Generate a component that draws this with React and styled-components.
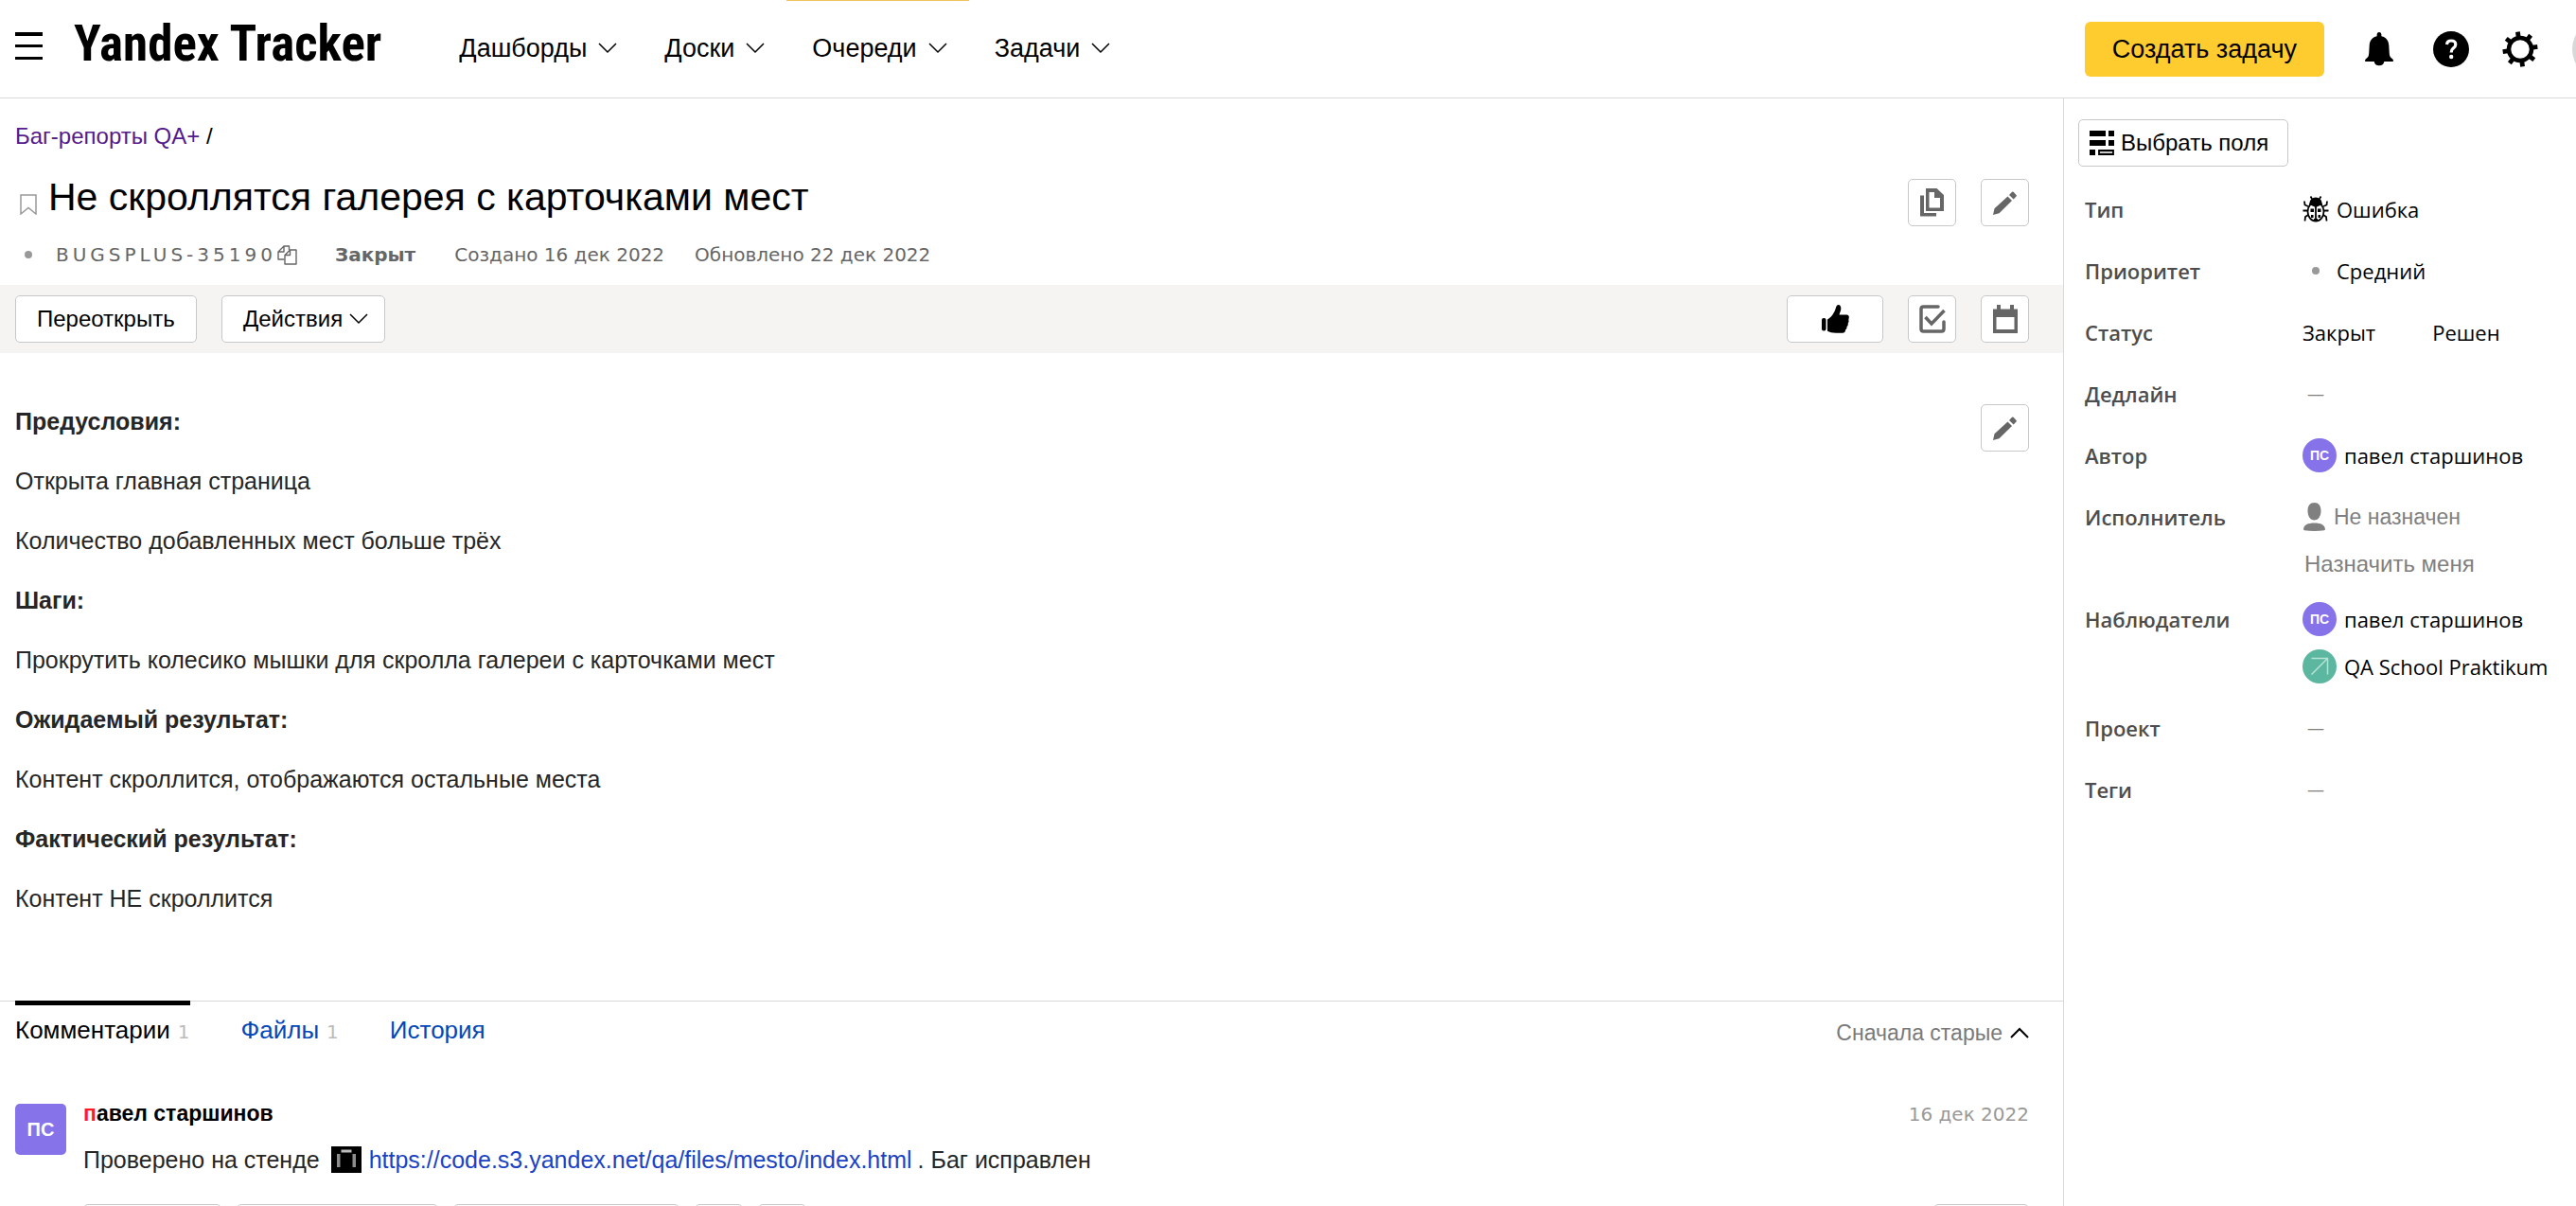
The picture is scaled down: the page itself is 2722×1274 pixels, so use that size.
import React from "react";
import styled, { createGlobalStyle } from "styled-components";

const SANS = '"Liberation Sans", Arial, sans-serif';
const HUMANIST = '"Open Sans", "Noto Sans", sans-serif';
const META = '"DejaVu Sans", Verdana, sans-serif';

const GlobalStyle = createGlobalStyle`
  *, *::before, *::after { box-sizing: border-box; }
  body { margin: 0; background: #fff; color: #000; font-family: ${SANS}; }
  button { font-family: inherit; color: inherit; margin: 0; cursor: pointer; }
  a { text-decoration: none; }
  svg { display: block; flex: none; }
  h1, h2, p, dl, dd, dt, ul { margin: 0; padding: 0; font-weight: inherit; }
`;

/* ---------- layout ---------- */
const Page = styled.div`
  height: 100vh;
  display: flex;
  flex-direction: column;
  overflow: hidden;
`;
const Header = styled.header`
  flex: none;
  height: 104px;
  border-bottom: 1px solid #d9d9d9;
  display: flex;
  align-items: flex-start;
  overflow: hidden;
`;
const Body = styled.div`
  flex: 1;
  min-height: 0;
  display: flex;
`;
const Main = styled.main`
  flex: 1;
  min-width: 0;
  overflow: hidden;
`;
const Sidebar = styled.aside`
  flex: 0 0 542px;
  border-left: 1px solid #d9d9d9;
  padding: 22px 15px 0;
`;

/* ---------- header ---------- */
const MenuButton = styled.button`
  margin: 33px 0 0 16px;
  padding: 0;
  border: 0;
  background: none;
`;
const Logo = styled.a`
  margin-left: 33px;
  padding-top: 14px;
  font-family: "Roboto Condensed", "Open Sans", sans-serif;
  font-weight: 700;
  font-size: 53px;
  line-height: 64px;
  color: #000;
  white-space: nowrap;
`;
const Nav = styled.nav`
  display: flex;
  margin-left: 55px;
`;
const NavItem = styled.button`
  display: flex;
  align-items: center;
  gap: 12px;
  height: 100px;
  padding: 0 23px 0 27px;
  border: 0;
  border-top: 1px solid ${(p) => (p.$active ? "#f0c35c" : "transparent")};
  background: none;
  font-size: 27px;
  line-height: 32px;
  white-space: nowrap;
`;
const HeaderTools = styled.div`
  display: flex;
  align-items: center;
  height: 104px;
  margin-left: auto;
  flex: none;
`;
const CreateButton = styled.button`
  height: 58px;
  padding: 0 29px;
  border: 0;
  border-radius: 6px;
  background: #ffcc2f;
  font-size: 27px;
  white-space: nowrap;
`;
const ToolButton = styled.button`
  padding: 0;
  border: 0;
  background: none;
  margin-left: ${(p) => p.$gap}px;
`;
const UserPhoto = styled.div`
  width: 4px;
  height: 64px;
  margin-left: 36px;
  position: relative;
  overflow: hidden;
  &::before {
    content: "";
    position: absolute;
    left: 0;
    top: 0;
    width: 64px;
    height: 64px;
    border-radius: 50%;
    background: #d8d8d8;
  }
`;

/* ---------- issue head ---------- */
const IssueHead = styled.section`
  padding: 26px 36px 19px 16px;
`;
const Crumbs = styled.nav`
  font-size: 24px;
  line-height: 28px;
  a { color: #551a8b; }
`;
const TitleRow = styled.div`
  display: flex;
  align-items: flex-start;
  justify-content: space-between;
  margin-top: 26px;
`;
const TitleGroup = styled.div`
  display: flex;
  align-items: flex-start;
  height: 56px;
`;
const BookmarkButton = styled.button`
  padding: 21px 12px 0 5px;
  border: 0;
  background: none;
`;
const Title = styled.h1`
  font-size: 41px;
  line-height: 48px;
`;
const Actions = styled.div`
  display: flex;
  gap: 26px;
  margin-left: auto;
  padding-top: ${(p) => p.$top || 0}px;
`;
const Meta = styled.div`
  display: flex;
  align-items: center;
  margin-top: 16px;
  font-family: ${META};
  font-size: 20px;
  line-height: 26px;
  color: #666;
  white-space: nowrap;
`;
const PriorityDot = styled.span`
  flex: none;
  width: 8px;
  height: 8px;
  border-radius: 50%;
  background: #999;
  margin: 0 ${(p) => p.$after}px 0 10px;
`;
const IssueKey = styled.span`
  letter-spacing: 4px;
`;
const CopyKey = styled.button`
  padding: 0;
  margin: 0 40px 0 1px;
  border: 0;
  background: none;
`;
const MetaStatus = styled.strong`
  font-weight: 700;
  margin-right: 41px;
`;
const MetaDate = styled.span`
  margin-right: 32px;
`;

/* ---------- buttons ---------- */
const Button = styled.button`
  display: flex;
  align-items: center;
  justify-content: flex-start;
  gap: 7px;
  height: 50px;
  min-width: ${(p) => p.$width || 51}px;
  padding: 0 17px 0 ${(p) => p.$left || 22}px;
  border: 1px solid #c8c8c8;
  border-radius: 5px;
  background: #fff;
  font-size: 24px;
  line-height: 28px;
  white-space: nowrap;
`;
const IconButton = styled(Button)`
  justify-content: center;
  padding: 0;
`;
const Toolbar = styled.div`
  display: flex;
  gap: 26px;
  padding: 11px 36px 11px 16px;
  background: #f5f4f2;
`;

/* ---------- description ---------- */
const Description = styled.section`
  display: flex;
  align-items: flex-start;
  padding: 54px 36px 90px 16px;
  color: #262626;
`;
const DescriptionText = styled.div`
  flex: 1;
  display: flex;
  flex-direction: column;
  gap: 27px;
  font-size: 25px;
  line-height: 36px;
`;

/* ---------- tabs ---------- */
const Tabs = styled.div`
  display: flex;
  align-items: flex-start;
  gap: 54px;
  height: 48px;
  padding: 0 36px 0 16px;
  border-top: 1px solid #d9d9d9;
`;
const Tab = styled.button`
  display: flex;
  align-items: baseline;
  gap: 8px;
  margin-top: -1px;
  padding: 10px 0 0;
  border: 0;
  border-top: 5px solid ${(p) => (p.$active ? "#000" : "transparent")};
  background: none;
  color: ${(p) => (p.$active ? "#000" : "#0447b8")};
  font-size: 26px;
  line-height: 32px;
`;
const Count = styled.span`
  font-family: ${META};
  font-size: 20px;
  color: #bbb;
`;
const SortButton = styled.button`
  display: flex;
  align-items: center;
  gap: 8px;
  margin-left: auto;
  padding: 17px 0 0;
  border: 0;
  background: none;
  color: #7a7a7a;
  font-size: 23px;
  line-height: 32px;
`;

/* ---------- comment ---------- */
const Comment = styled.article`
  display: flex;
  align-items: flex-start;
  gap: 18px;
  padding: 57px 36px 0 16px;
`;
const SquareAvatar = styled.div`
  flex: none;
  width: 54px;
  height: 54px;
  margin-top: 4px;
  border-radius: 5px;
  background: #8673ea;
  color: #fff;
  font-weight: 700;
  font-size: 20px;
  line-height: 54px;
  text-align: center;
`;
const CommentBody = styled.div`
  flex: 1;
  min-width: 0;
`;
const CommentHead = styled.div`
  display: flex;
  justify-content: space-between;
  align-items: baseline;
  line-height: 28px;
`;
const Author = styled.strong`
  display: block;
  font-size: 23px;
  &::first-letter { color: #ff1a24; }
`;
const CommentDate = styled.time`
  font-family: ${META};
  font-size: 20px;
  color: #999;
`;
const CommentText = styled.p`
  display: flex;
  align-items: center;
  margin-top: 15px;
  font-size: 25px;
  line-height: 38px;
  color: #262626;
  a { color: #1a43c4; margin: 0 6px 0 8px; }
  svg { margin-left: 12px; }
`;
const CommentActions = styled.div`
  display: flex;
  gap: 16px;
  margin-top: 28px;
  & > :last-child { margin-left: auto; }
`;

/* ---------- sidebar ---------- */
const Fields = styled.dl`
  display: flex;
  flex-direction: column;
  gap: 29px;
  padding: 27px 0 0 7px;
`;
const Field = styled.div`
  display: grid;
  grid-template-columns: 230px 1fr;
`;
const FieldName = styled.dt`
  font-family: ${HUMANIST};
  font-weight: 600;
  font-size: 22px;
  line-height: 36px;
  color: #4d4d4d;
`;
const FieldValues = styled.dd`
  display: flex;
  flex-direction: ${(p) => (p.$row ? "row" : "column")};
  gap: ${(p) => p.$gap || 14}px;
`;
const Value = styled.div`
  display: flex;
  align-items: center;
  gap: 8px;
  font-family: ${HUMANIST};
  font-weight: 500;
  font-size: 22px;
  line-height: 36px;
  white-space: nowrap;
`;
const Muted = styled.span`
  font-family: ${SANS};
  font-weight: 400;
  font-size: 23px;
  color: #808080;
`;
const Dash = styled.span`
  padding-left: 5px;
  font-size: 18px;
  color: #808080;
`;
const AssignLink = styled.a`
  font-size: 24px;
  line-height: 22px;
  padding-left: 2px;
  color: #808080;
`;
const RoundAvatar = styled.span`
  display: flex;
  align-items: center;
  justify-content: center;
  width: 36px;
  height: 36px;
  border-radius: 50%;
  background: ${(p) => p.$color};
  color: #fff;
  font-family: ${SANS};
  font-weight: 700;
  font-size: 14px;
`;

/* ---------- icons ---------- */
const Chevron = ({ up }) => (
  <svg width="20" height="12" viewBox="0 0 20 12" fill="none" stroke="#000" strokeWidth={up ? 2 : 1.5}>
    <path d={up ? "M1 11 10 2l9 9" : "M1 1l9 9 9-9"} />
  </svg>
);
const MenuIcon = () => (
  <svg width="29" height="32" viewBox="0 0 29 32">
    <path d="M0 1h29v4H0zM0 14h29v3H0zM0 27h29v3H0z" />
  </svg>
);
const BellIcon = () => (
  <svg width="30" height="36" viewBox="0 0 30 36">
    <path d="M15 0c1.500 0 2.400 1.200 2.400 2.800v1.400C22.500 5.300 25 9 25.300 14l.5 8.500c.2 3 1.200 4.300 3 5.500.8.600 1.200 1.200 1.200 2 0 .6-.4 1-1 1h-8.700a5.400 5.400 0 0 1-10.600 0H1c-.6 0-1-.4-1-1 0-.8.400-1.400 1.200-2 1.800-1.200 2.800-2.500 3-5.500L4.700 14C5 9 7.500 5.300 12.600 4.200V2.800C12.600 1.200 13.500 0 15 0z" />
  </svg>
);
const HelpIcon = () => (
  <svg width="38" height="38" viewBox="0 0 38 38" fill="none">
    <circle cx="19" cy="19" r="19" fill="#000" />
    <path d="M14.500 14c.2-2.500 2-4 4.600-4 2.800 0 4.700 1.500 4.700 4 0 2-1.100 3-2.600 4.100-1.500 1.200-2 2-2 4.400" stroke="#fff" strokeWidth="3.200" />
    <circle cx="19.200" cy="27" r="2.200" fill="#fff" />
  </svg>
);
const GearIcon = () => (
  <svg width="38" height="38" viewBox="0 0 38 38">
    <circle cx="19" cy="19" r="12" fill="none" stroke="#000" strokeWidth="4.500" />
    {[0, 45, 90, 135, 180, 225, 270, 315].map((a) => (
      <rect key={a} x="16.600" y="0.500" width="4.800" height="6.500" transform={`rotate(${a - 8} 19 19)`} />
    ))}
  </svg>
);
const BookmarkIcon = () => (
  <svg width="18" height="22" viewBox="0 0 18 22" fill="none" stroke="#999" strokeWidth="1.500">
    <path d="M1 1h16v20l-8-6.500L1 21z" />
  </svg>
);
const CopyKeyIcon = () => (
  <svg width="21" height="21" viewBox="0 0 21 21" fill="none" stroke="#666" strokeWidth="1.400" strokeLinejoin="round">
    <path d="M7.500 15H1V7l6-6h5.500v4M1 7h6V1" />
    <path d="M13.500 5H20v15H8v-9.500zM13.500 5v5.500H8" />
  </svg>
);
const CopyIcon = () => (
  <svg width="25" height="30" viewBox="0 0 25 30" fill="#666">
    <path fillRule="evenodd" d="M6 0h11.500L25 7v17H6zM9.500 4v16.500h11.500V10h-6V4z" />
    <path d="M0 7.500h4v18.500h13v3.500H0z" />
  </svg>
);
const PencilIcon = () => (
  <svg width="25" height="25" viewBox="0 0 25 25" fill="#666">
    <path d="M15.500 5.500l4.500 4.500L6.500 23.200 0 25l1.500-6.800zM17 4l3-3.200q.8-.7 1.600 0L24.500 4q.7.700 0 1.500L21.700 8.500z" />
  </svg>
);
const ThumbIcon = () => (
  <svg width="29" height="30" viewBox="0 0 29 30">
    <rect x="0" y="14" width="4.500" height="13.500" rx="2" />
    <path d="M6 15.500c3-1.500 5.500-4.500 7.500-8.500C15 4 15 0 17.500 0c2 0 3 2 2.800 4.200-.2 2.500-1.300 4.300-1.800 6.300h7.800c2 0 2.700 1.500 2.500 3l-.5 2.500c.5 1 .3 2.500-.6 3.500.3 1.500-.1 2.800-1.200 3.600.2 1.500-.3 2.600-1.400 3.200 0 2-1.100 3.500-3.100 3.500h-7c-4 0-6.500-1-9-2z" />
  </svg>
);
const CheckIcon = () => (
  <svg width="28" height="30" viewBox="0 0 28 30" fill="none" stroke="#666" strokeWidth="3.500">
    <path d="M20 2H4.500Q2 2 2 4.500v21Q2 28 4.500 28h19q2.500 0 2.500-2.500V18" strokeLinecap="round" />
    <path d="M6.500 13l6.500 7L26.500 6" />
  </svg>
);
const CalendarIcon = () => (
  <svg width="26" height="30" viewBox="0 0 26 30" fill="#666">
    <path fillRule="evenodd" d="M0 4.500h4V0h4v4.500h10V0h4v4.500h4V30H0zM3.500 13v13h19V13z" />
  </svg>
);
const FieldsIcon = () => (
  <svg width="26" height="26" viewBox="0 0 26 26">
    <path d="M0 0h17v6H0zM20 0h6v6h-6zM0 10h17v6H0zM20 10h6v6h-6zM0 20h6v6H0z" />
    <path d="M10 21h15v4H10z" fill="#c9c9c9" stroke="#000" strokeWidth="1.800" />
  </svg>
);
const BugIcon = () => (
  <svg width="28" height="28" viewBox="0 0 28 28" fill="none" stroke="#000" strokeWidth="1.800">
    <ellipse cx="14" cy="16.500" rx="8.500" ry="10" />
    <path d="M8 8.500C8.500 4.500 10.500 2.500 14 2.500s5.500 2 6 6L14 11z" fill="#000" />
    <path d="M14 9v17" />
    <path d="M8.500 13.500H12v3.500H8.500zM16 13.500h3.500V17H16zM9 20h2.500v3H9zM16.500 20H19v3h-2.500zM12 24h4v3h-4z" fill="#000" stroke="none" />
    <path d="M10 3 8.500.5M18 3 19.500.5M6 11 2.500 9.500 2 5.500M22 11l3.500-1.500.5-4M5.500 15.500H.5M22.500 15.500h5M6 20l-3 2-.5 4.500M22 20l3 2 .5 4.500" />
  </svg>
);
const PersonIcon = () => (
  <svg width="25" height="30" viewBox="0 0 25 30" fill="#808080">
    <path d="M12.500 0C17 0 19.500 3.300 19.500 8.500c0 6-2.800 10-7 10s-7-4-7-10C5.500 3.300 8 0 12.500 0zM12.500 21.500c7 0 11 2 11.500 6.500q0 1-1 1.300Q18 30 12.500 30T2 29.300q-1-.3-1-1.300c.5-4.500 4.500-6.500 11.500-6.500z" />
  </svg>
);
const ArrowIcon = () => (
  <svg width="20" height="20" viewBox="0 0 20 20" fill="none" stroke="#b9e2d7" strokeWidth="1.500">
    <path d="M1.500 1.500h17v17M18.500 1.500l-17 17" />
  </svg>
);
const SiteIcon = () => (
  <svg width="32" height="28" viewBox="0 0 32 28">
    <path d="M0 0h32v28H0z" />
    <path d="M10.500 3.500h11v3h-11z" fill="#bdbdbd" />
    <path d="M6 8h3.500v14H6zM22.500 8H26v14h-3.500z" fill="#8d8d8d" />
  </svg>
);

const NAV = ["Дашборды", "Доски", "Очереди", "Задачи"];

const DESCRIPTION = [
  ["Предусловия:", true],
  ["Открыта главная страница"],
  ["Количество добавленных мест больше трёх"],
  ["Шаги:", true],
  ["Прокрутить колесико мышки для скролла галереи с карточками мест"],
  ["Ожидаемый результат:", true],
  ["Контент скроллится, отображаются остальные места"],
  ["Фактический результат:", true],
  ["Контент НЕ скроллится"],
];

const Person = () => (
  <Value>
    <RoundAvatar $color="#8673ea">ПС</RoundAvatar>
    павел старшинов
  </Value>
);

const FieldRow = ({ name, children, ...rest }) => (
  <Field>
    <FieldName>{name}</FieldName>
    <FieldValues {...rest}>{children}</FieldValues>
  </Field>
);

const EmptyValue = () => (
  <Value>
    <Dash>—</Dash>
  </Value>
);

export default function App() {
  return (
    <Page>
      <GlobalStyle />
      <Header>
        <MenuButton aria-label="Меню">
          <MenuIcon />
        </MenuButton>
        <Logo href="#">Yandex Tracker</Logo>
        <Nav>
          {NAV.map((item) => (
            <NavItem key={item} $active={item === "Очереди"}>
              {item}
              <Chevron />
            </NavItem>
          ))}
        </Nav>
        <HeaderTools>
          <CreateButton>Создать задачу</CreateButton>
          <ToolButton $gap={43} aria-label="Уведомления">
            <BellIcon />
          </ToolButton>
          <ToolButton $gap={42} aria-label="Помощь">
            <HelpIcon />
          </ToolButton>
          <ToolButton $gap={35} aria-label="Настройки">
            <GearIcon />
          </ToolButton>
          <UserPhoto />
        </HeaderTools>
      </Header>

      <Body>
        <Main>
          <IssueHead>
            <Crumbs>
              <a href="#">Баг-репорты QA+</a> /
            </Crumbs>
            <TitleRow>
              <TitleGroup>
                <BookmarkButton aria-label="В закладки">
                  <BookmarkIcon />
                </BookmarkButton>
                <Title>Не скроллятся галерея с карточками мест</Title>
              </TitleGroup>
              <Actions $top={5}>
                <IconButton aria-label="Копировать">
                  <CopyIcon />
                </IconButton>
                <IconButton aria-label="Редактировать">
                  <PencilIcon />
                </IconButton>
              </Actions>
            </TitleRow>
            <Meta>
              <PriorityDot $after={25} />
              <IssueKey>BUGSPLUS-35190</IssueKey>
              <CopyKey aria-label="Копировать ключ">
                <CopyKeyIcon />
              </CopyKey>
              <MetaStatus>Закрыт</MetaStatus>
              <MetaDate>Создано 16 дек 2022</MetaDate>
              <MetaDate>Обновлено 22 дек 2022</MetaDate>
            </Meta>
          </IssueHead>

          <Toolbar>
            <Button $width={192}>Переоткрыть</Button>
            <Button>
              Действия
              <Chevron />
            </Button>
            <Actions>
              <IconButton $width={102} aria-label="Нравится">
                <ThumbIcon />
              </IconButton>
              <IconButton aria-label="Чеклист">
                <CheckIcon />
              </IconButton>
              <IconButton aria-label="Дедлайн">
                <CalendarIcon />
              </IconButton>
            </Actions>
          </Toolbar>

          <Description>
            <DescriptionText>
              {DESCRIPTION.map(([text, bold]) => (
                <p key={text}>{bold ? <strong>{text}</strong> : text}</p>
              ))}
            </DescriptionText>
            <IconButton aria-label="Редактировать описание">
              <PencilIcon />
            </IconButton>
          </Description>

          <Tabs>
            <Tab $active>
              Комментарии <Count>1</Count>
            </Tab>
            <Tab>
              Файлы <Count>1</Count>
            </Tab>
            <Tab>История</Tab>
            <SortButton>
              Сначала старые
              <Chevron up />
            </SortButton>
          </Tabs>

          <Comment>
            <SquareAvatar>ПС</SquareAvatar>
            <CommentBody>
              <CommentHead>
                <Author>павел старшинов</Author>
                <CommentDate>16 дек 2022</CommentDate>
              </CommentHead>
              <CommentText>
                Проверено на стенде
                <SiteIcon />
                <a href="#">https://code.s3.yandex.net/qa/files/mesto/index.html</a>. Баг исправлен
              </CommentText>
              <CommentActions>
                <IconButton $width={146} aria-label="Ответить" />
                <IconButton $width={213} aria-label="Цитировать" />
                <IconButton $width={239} aria-label="Редактировать комментарий" />
                <IconButton aria-label="Ссылка" />
                <IconButton aria-label="Удалить" />
                <IconButton $width={101} aria-label="Нравится комментарий" />
              </CommentActions>
            </CommentBody>
          </Comment>
        </Main>

        <Sidebar>
          <Button $width={222} $left={11}>
            <FieldsIcon />
            Выбрать поля
          </Button>
          <Fields>
            <FieldRow name="Тип">
              <Value>
                <BugIcon />
                Ошибка
              </Value>
            </FieldRow>
            <FieldRow name="Приоритет">
              <Value>
                <PriorityDot $after={10} />
                Средний
              </Value>
            </FieldRow>
            <FieldRow name="Статус" $row $gap={60}>
              <Value>Закрыт</Value>
              <Value>Решен</Value>
            </FieldRow>
            <FieldRow name="Дедлайн">
              <EmptyValue />
            </FieldRow>
            <FieldRow name="Автор">
              <Person />
            </FieldRow>
            <FieldRow name="Исполнитель" $gap={21}>
              <Value>
                <PersonIcon />
                <Muted>Не назначен</Muted>
              </Value>
              <AssignLink href="#">Назначить меня</AssignLink>
            </FieldRow>
            <FieldRow name="Наблюдатели">
              <Person />
              <Value>
                <RoundAvatar $color="#5bb79f">
                  <ArrowIcon />
                </RoundAvatar>
                QA School Praktikum
              </Value>
            </FieldRow>
            <FieldRow name="Проект">
              <EmptyValue />
            </FieldRow>
            <FieldRow name="Теги">
              <EmptyValue />
            </FieldRow>
          </Fields>
        </Sidebar>
      </Body>
    </Page>
  );
}
